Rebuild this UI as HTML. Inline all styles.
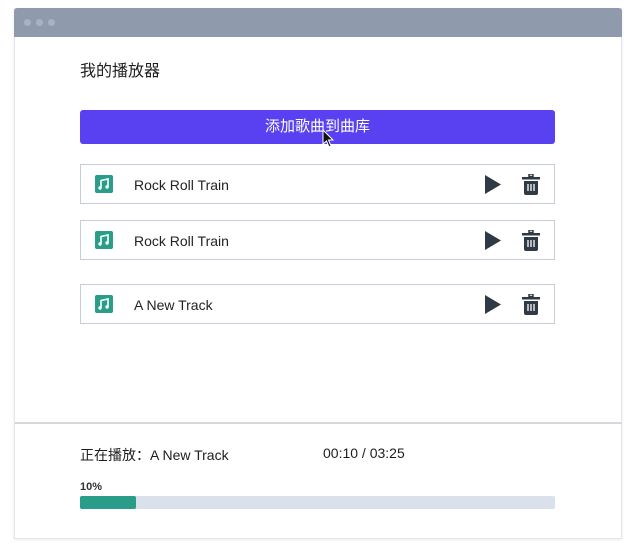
<!DOCTYPE html>
<html><head><meta charset="utf-8"><style>
*{margin:0;padding:0;box-sizing:border-box}
body{width:632px;height:548px;background:#fff;font-family:"Liberation Sans","Noto Sans CJK SC",sans-serif;position:relative;overflow:hidden;color:#1e1e1e}
.win{position:absolute;left:14px;top:8px;width:608px;height:531px;border:1px solid #e3e5e8;border-top:none;background:#fff;box-shadow:0 1px 3px rgba(0,0,0,.08)}
.bar{position:absolute;left:-1px;top:0;width:608px;height:29px;background:#8f9bad;border-radius:3px 3px 0 0}
.dot{position:absolute;top:11px;width:7px;height:7px;border-radius:50%;background:#a9b2c0}
.a{position:absolute}
.btn{left:80px;top:110px;width:475px;height:34px;background:#5940f0;border-radius:3px;color:#fff;font-size:15px;text-align:center;line-height:34px}
.row{left:80px;width:475px;height:40px;border:1.5px solid #c5cdd8;background:#fff}
.row .ic{position:absolute;left:14px;top:10px;width:18px;height:18px;background:#2a9d8a;border-radius:2px}
.row .t{position:absolute;left:53px;top:1px;line-height:38px;font-size:14px;color:#222}
.row .p{position:absolute;left:404px;top:10px}
.row .d{position:absolute;left:441px;top:9px}
</style></head><body>
<div class="win"><div class="bar"><div class="dot" style="left:10px"></div><div class="dot" style="left:22px"></div><div class="dot" style="left:34px"></div></div></div>
<div class="a" style="left:80px;top:62px;font-size:16px;line-height:20px">我的播放器</div>
<div class="a btn">添加歌曲到曲库</div>
<svg class="a" style="left:322px;top:129px" width="14" height="20" viewBox="0 0 14 20"><path d="M1 1 L1 15 L4.5 12 L7 18 L9 17 L6.5 11 L11 11 Z" fill="#111" stroke="#fff" stroke-width="1"/></svg>
<div class="a row" style="top:164px"><div class="ic"><svg width="18" height="18" viewBox="0 0 18 18"><path d="M6 13V5.5l7-1.5V12" fill="none" stroke="#fff" stroke-width="1.6"/><circle cx="5" cy="13" r="1.7" fill="#fff"/><circle cx="12" cy="12" r="1.7" fill="#fff"/></svg></div><div class="t">Rock Roll Train</div>
<svg class="p" width="16" height="19" viewBox="0 0 16 19"><path d="M0 0L16 9.5 0 19Z" fill="#2f3a45"/></svg>
<svg class="d" width="18" height="21" viewBox="0 0 18 21"><rect x="7" y="0" width="4" height="2.5" fill="none" stroke="#2f3a45" stroke-width="1.5"/><rect x="0" y="3" width="18" height="2.5" fill="#2f3a45"/><path d="M2 7H16V19a2 2 0 0 1-2 2H4a2 2 0 0 1-2-2Z" fill="#2f3a45"/><path d="M6 10v7M9 10v7M12 10v7" stroke="#fff" stroke-width="1.3"/></svg></div>
<div class="a row" style="top:220px"><div class="ic"><svg width="18" height="18" viewBox="0 0 18 18"><path d="M6 13V5.5l7-1.5V12" fill="none" stroke="#fff" stroke-width="1.6"/><circle cx="5" cy="13" r="1.7" fill="#fff"/><circle cx="12" cy="12" r="1.7" fill="#fff"/></svg></div><div class="t">Rock Roll Train</div>
<svg class="p" width="16" height="19" viewBox="0 0 16 19"><path d="M0 0L16 9.5 0 19Z" fill="#2f3a45"/></svg>
<svg class="d" width="18" height="21" viewBox="0 0 18 21"><rect x="7" y="0" width="4" height="2.5" fill="none" stroke="#2f3a45" stroke-width="1.5"/><rect x="0" y="3" width="18" height="2.5" fill="#2f3a45"/><path d="M2 7H16V19a2 2 0 0 1-2 2H4a2 2 0 0 1-2-2Z" fill="#2f3a45"/><path d="M6 10v7M9 10v7M12 10v7" stroke="#fff" stroke-width="1.3"/></svg></div>
<div class="a row" style="top:284px"><div class="ic"><svg width="18" height="18" viewBox="0 0 18 18"><path d="M6 13V5.5l7-1.5V12" fill="none" stroke="#fff" stroke-width="1.6"/><circle cx="5" cy="13" r="1.7" fill="#fff"/><circle cx="12" cy="12" r="1.7" fill="#fff"/></svg></div><div class="t">A New Track</div>
<svg class="p" width="16" height="19" viewBox="0 0 16 19"><path d="M0 0L16 9.5 0 19Z" fill="#2f3a45"/></svg>
<svg class="d" width="18" height="21" viewBox="0 0 18 21"><rect x="7" y="0" width="4" height="2.5" fill="none" stroke="#2f3a45" stroke-width="1.5"/><rect x="0" y="3" width="18" height="2.5" fill="#2f3a45"/><path d="M2 7H16V19a2 2 0 0 1-2 2H4a2 2 0 0 1-2-2Z" fill="#2f3a45"/><path d="M6 10v7M9 10v7M12 10v7" stroke="#fff" stroke-width="1.3"/></svg></div>
<div class="a" style="left:15px;top:422px;width:607px;height:1.5px;background:#d5d9de"></div>
<div class="a" style="left:80px;top:445px;font-size:14px">正在播放：A New Track</div>
<div class="a" style="left:323px;top:445px;font-size:14px">00:10 / 03:25</div>
<div class="a" style="left:80px;top:481px;font-size:11px;font-weight:bold;color:#333">10%</div>
<div class="a" style="left:80px;top:496px;width:475px;height:13px;background:#dbe1ea;border-radius:2px"></div>
<div class="a" style="left:80px;top:496px;width:56px;height:13px;background:#2a9d8a;border-radius:2px"></div>
</body></html>
